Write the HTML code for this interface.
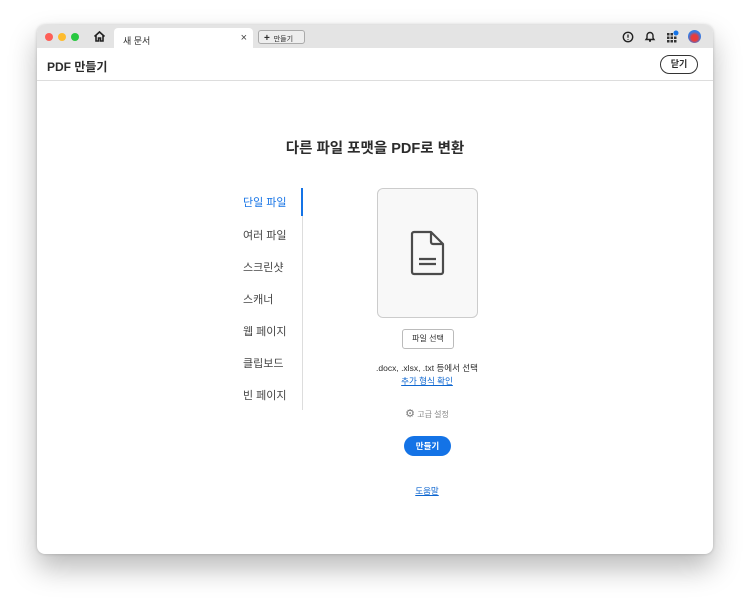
<!DOCTYPE html>
<html><head><meta charset="utf-8"><style>
*{margin:0;padding:0;box-sizing:border-box}
body{width:750px;height:604px;background:#fff;position:relative;overflow:hidden;font-family:"Liberation Sans","Noto Sans CJK KR",sans-serif;color:#2c2c2c}
.win{position:absolute;left:37px;top:25px;width:676px;height:529px;background:#fff;border-radius:8px;box-shadow:0 14px 28px rgba(0,0,0,.28),0 0 3px rgba(0,0,0,.2);overflow:hidden}
.tabs{position:absolute;left:0;top:0;width:100%;height:23px;background:#e4e4e4}
.dot{position:absolute;top:8px;width:8px;height:8px;border-radius:50%}
.tab{position:absolute;left:77px;top:3px;width:139px;height:20px;background:#fff;border-radius:4px 4px 0 0;font-size:9px;padding:6px 0 0 9px}
.tab .x{position:absolute;right:6px;top:4px;font-size:11px;color:#444}
.newbtn{position:absolute;left:221px;top:5px;width:47px;height:14px;border:1px solid #aaa;border-radius:3px;background:#eee;font-size:7px;padding:2px 0 0 5px}
.hdr{position:absolute;left:0;top:23px;width:100%;height:33px;border-bottom:1px solid #ddd}
.hdr b{position:absolute;left:10px;top:10px;font-size:12px}
.close{position:absolute;right:15px;top:7px;width:38px;height:19px;border:1.5px solid #333;border-radius:10px;font-size:9px;font-weight:bold;text-align:center;line-height:16px}
h1{position:absolute;left:0;width:100%;top:112px;text-align:center;font-size:14.5px;font-weight:bold}
.nav{position:absolute;left:206px;font-size:11px;color:#444}
.vline{position:absolute;left:265px;top:163px;width:1px;height:222px;background:#ddd}
.vact{position:absolute;left:264px;top:163px;width:2px;height:28px;background:#1473e6}
.card{position:absolute;left:340px;top:163px;width:101px;height:130px;border:1px solid #ccc;border-radius:6px;background:#f8f8f8}
.sel{position:absolute;left:365px;top:304px;width:52px;height:20px;border:1px solid #bbb;border-radius:3px;font-size:8px;text-align:center;line-height:18px;background:#fff}
.c{position:absolute;left:290px;width:200px;text-align:center;white-space:nowrap}
.make{position:absolute;left:367px;top:411px;width:47px;height:20px;border-radius:10px;background:#1473e6;color:#fff;font-size:8.5px;font-weight:bold;text-align:center;line-height:20px}
a{color:#0d66d0;text-decoration:underline}
</style></head><body>
<div class="win">
 <div class="tabs">
  <div class="dot" style="left:8px;background:#fe5f57"></div>
  <div class="dot" style="left:21px;background:#febc2e"></div>
  <div class="dot" style="left:34px;background:#28c840"></div>
  <svg style="position:absolute;left:56px;top:5px" width="13" height="13" viewBox="0 0 13 13"><path d="M1.5 6.5L6.5 2l5 4.5M3 5.5V11h2.5V8h2v3H10V5.5" fill="none" stroke="#222" stroke-width="1.6"/></svg>
  <div class="tab">새 문서<span class="x">×</span></div>
  <div class="newbtn"><b style="font-size:10px">+</b>&nbsp; 만들기</div>
  <svg style="position:absolute;left:585px;top:6px" width="12" height="12"><circle cx="6" cy="6" r="4.7" fill="none" stroke="#222" stroke-width="1.4"/><path d="M6 3.5v3.2M6 8v.8" stroke="#222" stroke-width="1.3"/></svg>
  <svg style="position:absolute;left:607px;top:5px" width="12" height="13"><path d="M2 9.5h8l-1-1.5V5.5a3 3 0 0 0-6 0V8z M5 11h2" fill="none" stroke="#222" stroke-width="1.4"/></svg>
  <svg style="position:absolute;left:629px;top:5px" width="13" height="13"><g fill="#333"><rect x="1" y="3" width="2.5" height="2.5"/><rect x="4.5" y="3" width="2.5" height="2.5"/><rect x="1" y="6.5" width="2.5" height="2.5"/><rect x="4.5" y="6.5" width="2.5" height="2.5"/><rect x="8" y="6.5" width="2.5" height="2.5"/><rect x="1" y="10" width="2.5" height="2.5"/><rect x="4.5" y="10" width="2.5" height="2.5"/><rect x="8" y="10" width="2.5" height="2.5"/></g><circle cx="10" cy="3" r="2.5" fill="#1473e6"/></svg>
  <div style="position:absolute;left:651px;top:5px;width:13px;height:13px;border-radius:50%;background:radial-gradient(circle at 50% 60%,#e83c3c 30%,#3a7be0 60%)"></div>
 </div>
 <div class="hdr"><b>PDF 만들기</b><div class="close">닫기</div></div>
 <h1>다른 파일 포맷을 PDF로 변환</h1>
 <div class="nav" style="top:169px;color:#1473e6">단일 파일</div>
 <div class="nav" style="top:202px">여러 파일</div>
 <div class="nav" style="top:234px">스크린샷</div>
 <div class="nav" style="top:266px">스캐너</div>
 <div class="nav" style="top:298px">웹 페이지</div>
 <div class="nav" style="top:330px">클립보드</div>
 <div class="nav" style="top:362px">빈 페이지</div>
 <div class="vline"></div><div class="vact"></div>
 <div class="card"><svg style="position:absolute;left:31px;top:41px" width="38" height="46" viewBox="0 0 38 46"><path d="M3 4a2 2 0 0 1 2-2h17l12 12v28a2 2 0 0 1-2 2H5a2 2 0 0 1-2-2z M22 2v10a2 2 0 0 0 2 2h10 M10 29h17 M10 34h17" fill="none" stroke="#4b4b4b" stroke-width="2.2" stroke-linejoin="round"/></svg></div>
 <div class="sel">파일 선택</div>
 <div class="c" style="top:337px;font-size:8.5px">.docx, .xlsx, .txt 등에서 선택</div>
 <div class="c" style="top:350px;font-size:8.5px"><a>추가 형식 확인</a></div>
 <div class="c" style="top:382px;font-size:8px;color:#888"><span style="font-size:11px;color:#777">⚙</span> 고급 설정</div>
 <div class="make">만들기</div>
 <div class="c" style="top:460px;font-size:8.5px"><a>도움말</a></div>
</div>
</body></html>
